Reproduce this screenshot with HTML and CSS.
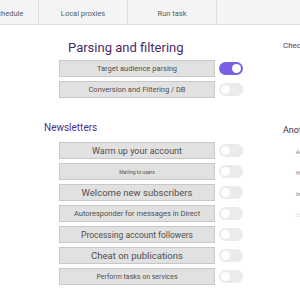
FILE: index.html
```html
<!DOCTYPE html>
<html lang="en">
<head>
    <meta charset="UTF-8">
    <meta name="viewport" content="width=device-width, initial-scale=1.0">
    <title>Tasks</title>
    <link rel="stylesheet" href="styles.css">
</head>
<body>
    <div class="tabs">
        <div class="tab tab-first">Schedule</div>
        <div class="tab">Local proxies</div>
        <div class="tab">Run task</div>
    </div>

    <div class="main">
        <div class="side-left"></div>

        <div class="center">
            <h2 class="title">Parsing and filtering</h2>
            <div class="row">
                <button class="task">Target audience parsing</button>
                <span class="toggle on"></span>
            </div>
            <div class="row">
                <button class="task">Conversion and Filtering / DB</button>
                <span class="toggle"></span>
            </div>

            <h3 class="subtitle">Newsletters</h3>
            <div class="row">
                <button class="task fs-l">Warm up your account</button>
                <span class="toggle"></span>
            </div>
            <div class="row">
                <button class="task fs-xs">Mailing to users</button>
                <span class="toggle"></span>
            </div>
            <div class="row">
                <button class="task fs-xl">Welcome new subscribers</button>
                <span class="toggle"></span>
            </div>
            <div class="row">
                <button class="task">Autoresponder for messages in Direct</button>
                <span class="toggle"></span>
            </div>
            <div class="row">
                <button class="task fs-m">Processing account followers</button>
                <span class="toggle"></span>
            </div>
            <div class="row">
                <button class="task fs-xl">Cheat on publications</button>
                <span class="toggle"></span>
            </div>
            <div class="row">
                <button class="task fs-s">Perform tasks on services</button>
                <span class="toggle"></span>
            </div>
        </div>

        <div class="side-right">
            <div class="side-title">Checking</div>
            <div class="side-title second">Another</div>
            <div class="side-item">Accounts</div>
            <div class="side-item">History</div>
            <div class="side-item">Import</div>
            <div class="side-item faint">Export</div>
        </div>
    </div>
</body>
</html>
```

FILE: styles.css
```css
body {
    margin: 0;
    font-family: Roboto, "Liberation Sans", sans-serif;
    background: #fff;
    overflow: hidden;
    width: 300px;
    height: 300px;
}
.tabs {
    display: flex;
    height: 24px;
    background: #f4f4f4;
    border-bottom: 1px solid #e0e0e0;
}
.tab {
    width: 88px;
    border-right: 1px solid #dedede;
    font-size: 7.5px;
    color: #5a5a5a;
    display: flex;
    align-items: center;
    justify-content: center;
    padding-top: 2px;
}
.tab-first {
    width: 60px;
    margin-left: -22px;
}
.main {
    display: flex;
}
.side-left {
    width: 44px;
    flex-shrink: 0;
}
.center {
    width: 239px;
    flex-shrink: 0;
}
.title {
    margin: 15px 0 4px 24px;
    font-size: 13px;
    line-height: 16px;
    font-weight: 400;
    color: #4a2c66;
    white-space: nowrap;
}
.subtitle {
    margin: 24px 0 8px 0;
    font-size: 10px;
    line-height: 12px;
    font-weight: 400;
    color: #4b3086;
}
.row {
    display: flex;
    align-items: center;
    margin: 0 0 4px 15px;
}
.task {
    width: 156px;
    height: 17px;
    padding: 0;
    background: #e1e1e1;
    border: 1px solid #c8c8c8;
    color: #505050;
    font-family: Roboto, "Liberation Sans", sans-serif;
    font-size: 7.5px;
    white-space: nowrap;
}
.fs-xs { font-size: 5px; }
.fs-s { font-size: 7px; }
.fs-m { font-size: 8.5px; }
.fs-l { font-size: 9px; }
.fs-xl { font-size: 9.5px; }
.toggle {
    position: relative;
    width: 24px;
    height: 13px;
    margin-left: 4px;
    border-radius: 7px;
    background: #ebebeb;
}
.toggle::after {
    content: "";
    position: absolute;
    top: 2px;
    left: 2px;
    width: 9px;
    height: 9px;
    border-radius: 50%;
    background: #fff;
}
.toggle.on {
    background: #7a5fe4;
}
.toggle.on::after {
    left: 13px;
}
.side-right {
    white-space: nowrap;
}
.side-title {
    margin-top: 16px;
    font-size: 8px;
    color: #5b3562;
}
.side-title.second {
    margin-top: 75px;
    font-size: 9px;
    color: #3b2d4d;
}
.side-item {
    margin: 13px 0 0 13px;
    font-size: 5px;
    line-height: 8px;
    color: #777;
}
.side-item.faint {
    color: #e8e0e0;
}
```
